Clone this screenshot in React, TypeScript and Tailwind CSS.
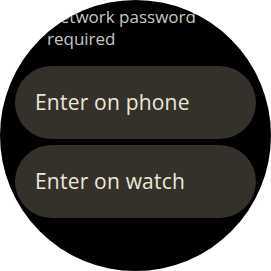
import React from "react";

export default function App() {
  return (
    <div className="w-[271px] h-[271px] bg-white">
      <div
        className="w-[271px] h-[271px] rounded-full bg-black overflow-hidden flex flex-col"
        style={{ fontFamily: "'Open Sans', Roboto, sans-serif" }}
      >
        <p className="pl-[47px] pt-[6px] w-[230px] text-[17px] leading-[22px] text-[#c9c7c2]">
          Network password required
        </p>
        <div className="flex flex-col gap-[6px] px-[15px] mt-[16px]">
          <button className="h-[73px] rounded-full bg-[#34312a] text-left pl-[20px] text-[21px] tracking-[0.2px] text-[#ede7da]">
            Enter on phone
          </button>
          <button className="h-[73px] rounded-full bg-[#34312a] text-left pl-[20px] text-[21px] tracking-[0.2px] text-[#ede7da]">
            Enter on watch
          </button>
        </div>
      </div>
    </div>
  );
}
